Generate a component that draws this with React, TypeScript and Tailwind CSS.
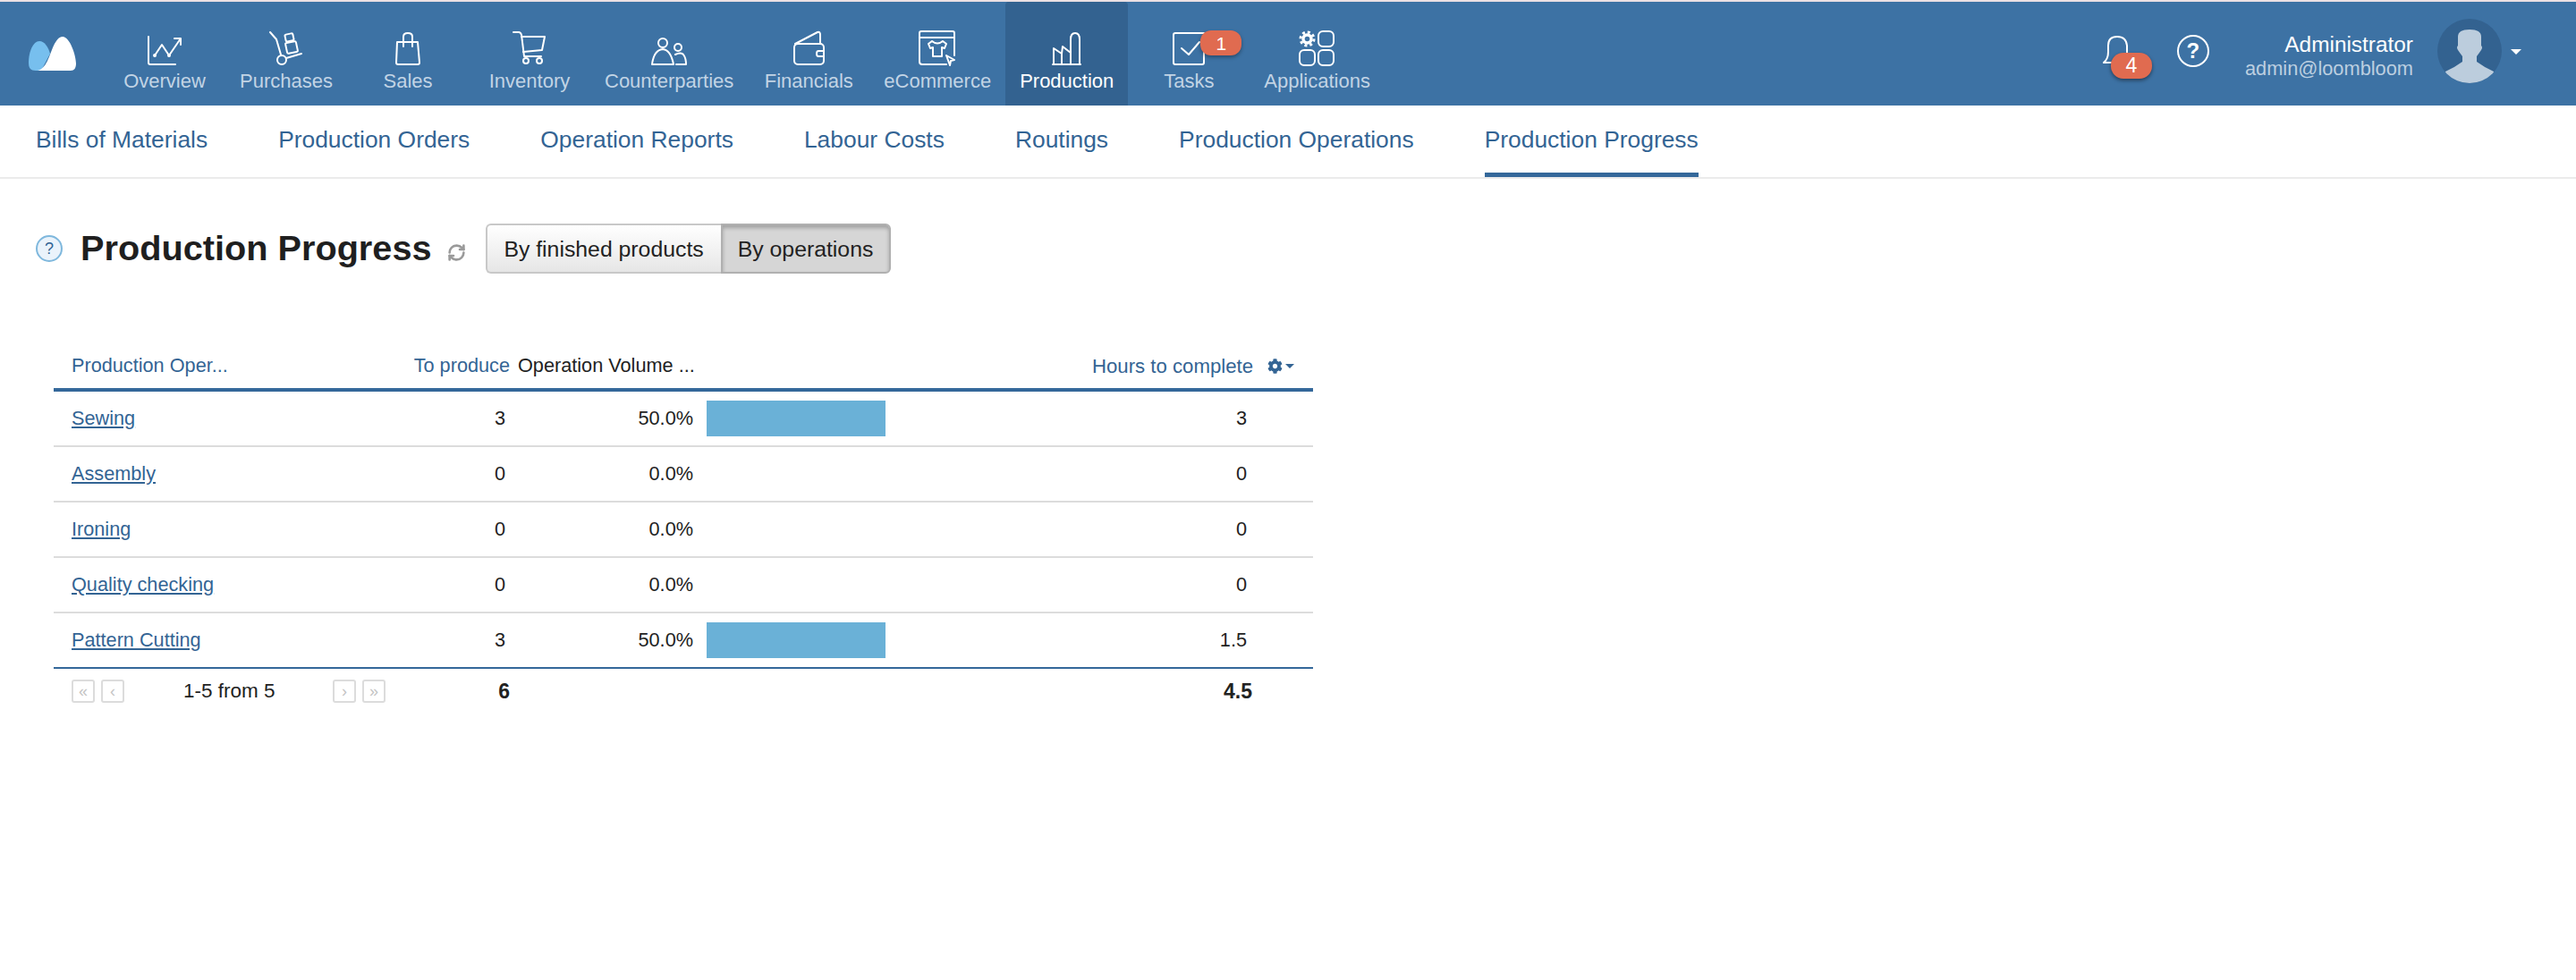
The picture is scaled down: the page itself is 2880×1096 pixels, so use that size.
import { RefreshCw } from 'lucide-react';
import { FaCog } from 'react-icons/fa';

const s = { fill: 'none', stroke: 'currentColor', strokeWidth: 2, strokeLinecap: 'round', strokeLinejoin: 'round' } as const;

function Logo() {
  return (
    <svg width="53" height="38" viewBox="0 0 53 38">
      <path fill="#77bfee" d="M8 38C2 38 0 35 0 29 0 17 5 5 12 5c6 0 10 7 12 14L14 38Z" />
      <path fill="#fff" d="M10 38c10-2 13-17 18-28 3-6 6-10 10-10 8 0 15 21 15 30 0 5-2 8-6 8Z" />
    </svg>
  );
}

const icons = {
  overview: (
    <svg width="40" height="40" viewBox="0 0 40 40" {...s}>
      <path d="M2 7V36q0 2 2 2H32" />
      <path d="M9 28 17 16 25 28 38 9M31 9h7v7" />
      <circle cx="9" cy="28" r="1" />
      <circle cx="25" cy="28" r="1" />
    </svg>
  ),
  purchases: (
    <svg width="38" height="40" viewBox="0 0 38 40" {...s}>
      <path d="M1 2 8 10 13 27" />
      <circle cx="14" cy="33" r="5" />
      <path d="M19 31 36 26" />
      <rect x="18" y="4" width="9" height="8" rx="1.5" transform="rotate(-12 22 8)" />
      <rect x="19" y="13" width="12" height="12" rx="1.5" transform="rotate(-12 25 19)" />
    </svg>
  ),
  sales: (
    <svg width="30" height="40" viewBox="0 0 30 40" {...s}>
      <path d="M3 13H26L28 36Q28 38 26 38H4Q2 38 2 36Z" />
      <path d="M10 18V7Q10 3 15 3 20 3 20 7V18" />
    </svg>
  ),
  inventory: (
    <svg width="38" height="40" viewBox="0 0 38 40" {...s}>
      <path d="M1 2H7Q9 2 10 5L13 29H32" />
      <path d="M10 7H36L33 22 12 24" />
      <circle cx="15" cy="34" r="3" />
      <circle cx="30" cy="34" r="3" />
    </svg>
  ),
  counterparties: (
    <svg width="40" height="40" viewBox="0 0 40 40" {...s}>
      <circle cx="13" cy="14" r="5" />
      <path d="M1 38Q3 22 13 21 22 22 25 38Z" />
      <circle cx="30" cy="19" r="4" />
      <path d="M27 27Q33 24 36 27 39 31 39 38H28" />
    </svg>
  ),
  financials: (
    <svg width="36" height="40" viewBox="0 0 36 40" {...s}>
      <path d="M3 15 28 2Q31 1 31 5V15" />
      <rect x="2" y="15" width="33" height="23" rx="4" />
      <path d="M35 23H29Q27 23 27 26 27 29 29 29H35" />
    </svg>
  ),
  ecommerce: (
    <svg width="42" height="40" viewBox="0 0 42 40" {...s}>
      <path d="M31 38H4Q1 38 1 35V3Q1 1 3 1H38Q40 1 40 3V28" />
      <path d="M1 8H40" />
      <path d="M15 12 11 15 13 20 16 19V29H26V19L29 20 31 15 27 12Q21 17 15 12Z" />
      <path d="M31 28 40 33 36 34 35 39Z" />
    </svg>
  ),
  production: (
    <svg width="33" height="40" viewBox="0 0 33 40" {...s}>
      <path d="M1 38H32M2 38V20L11 26V38M11 26 12 18 21 25V38" />
      <path d="M21 38V10Q21 3 26 3 31 3 31 10V38" />
    </svg>
  ),
  tasks: (
    <svg width="38" height="40" viewBox="0 0 38 40" {...s}>
      <path d="M36 3H4Q2 3 2 5V36Q2 38 4 38H34Q36 38 36 36V3" />
      <path d="M11 20 19 27 31 13" />
    </svg>
  ),
  apps: (
    <svg width="42" height="40" viewBox="0 0 42 40" {...s}>
      <rect x="22" y="1" width="17" height="17" rx="5" />
      <rect x="1" y="22" width="17" height="17" rx="5" />
      <rect x="22" y="22" width="17" height="17" rx="5" />
      <circle cx="9.5" cy="9.5" r="7.5" strokeWidth="3" strokeLinecap="butt" strokeDasharray="3 2.9" />
      <circle cx="9.5" cy="9.5" r="4.5" strokeWidth="3.4" />
    </svg>
  ),
};

const navItems = [
  { label: 'Overview', icon: icons.overview },
  { label: 'Purchases', icon: icons.purchases },
  { label: 'Sales', icon: icons.sales },
  { label: 'Inventory', icon: icons.inventory },
  { label: 'Counterparties', icon: icons.counterparties },
  { label: 'Financials', icon: icons.financials },
  { label: 'eCommerce', icon: icons.ecommerce },
  { label: 'Production', icon: icons.production, active: true },
  { label: 'Tasks', icon: icons.tasks, badge: '1' },
  { label: 'Applications', icon: icons.apps },
];

const subItems = [
  'Bills of Materials',
  'Production Orders',
  'Operation Reports',
  'Labour Costs',
  'Routings',
  'Production Operations',
  'Production Progress',
];

const rows = [
  { name: 'Sewing', qty: '3', pct: '50.0%', bar: true, hours: '3' },
  { name: 'Assembly', qty: '0', pct: '0.0%', bar: false, hours: '0' },
  { name: 'Ironing', qty: '0', pct: '0.0%', bar: false, hours: '0' },
  { name: 'Quality checking', qty: '0', pct: '0.0%', bar: false, hours: '0' },
  { name: 'Pattern Cutting', qty: '3', pct: '50.0%', bar: true, hours: '1.5' },
];

function PagerButton({ label }: { label: string }) {
  return (
    <span className="flex h-[26px] w-[26px] items-center justify-center rounded-[3px] border-2 border-[#dcdcdc] text-[18px] leading-none text-[#c4c4c4]">
      {label}
    </span>
  );
}

export default function App() {
  return (
    <div className="min-h-[1096px] bg-white [font-family:'Liberation_Sans',Arial,sans-serif]">
      {/* Top bar */}
      <div className="border-t-2 border-[#ebe0e4] bg-[#3d72a4]">
        <div className="flex h-[116px] items-stretch">
          <div className="flex w-[116px] shrink-0 items-start pl-[32px] pt-[39px]">
            <Logo />
          </div>
          {navItems.map((item) => (
            <div
              key={item.label}
              className={`flex min-w-[136px] flex-col items-center rounded-t-[4px] px-[16px] pt-[32px] text-white ${
                item.active ? 'bg-[#336290]' : ''
              }`}
            >
              <div className="relative flex h-[40px] items-end justify-center">
                {item.icon}
                {item.badge && (
                  <span className="absolute left-[32px] top-0 flex h-[28px] w-[46px] items-center justify-center rounded-[12px] bg-[#e06b50] text-[21px] leading-none text-white shadow-[0_2px_4px_rgba(0,0,0,0.35)]">
                    {item.badge}
                  </span>
                )}
              </div>
              <span className={`mt-[3px] whitespace-nowrap text-[22px] leading-[28px] ${item.active ? 'text-white' : 'text-[#c2d4e5]'}`}>
                {item.label}
              </span>
            </div>
          ))}

          <div className="ml-auto flex items-start pr-[61px]">
            <div className="relative mr-[51px] mt-[38px] h-[32px] w-[32px] text-white">
              <svg width="32" height="32" viewBox="0 0 32 32" {...s}>
                <path d="M1 30Q6 26 6 18V11Q6 1 16 1 26 1 27 11V22" />
                <path d="M1 30H12" />
              </svg>
              <span className="absolute left-[9px] top-[19px] flex h-[29px] w-[46px] items-center justify-center rounded-[14px] bg-[#e06b50] text-[23px] leading-none text-white shadow-[0_2px_4px_rgba(0,0,0,0.45)]">
                4
              </span>
            </div>
            <div className="mr-[40px] mt-[37px] flex h-[36px] w-[36px] items-center justify-center rounded-full border-2 border-white text-[24px] font-bold leading-none text-white">
              ?
            </div>
            <div className="mr-[27px] mt-[32px] flex flex-col items-end">
              <span className="text-[24.4px] leading-[32px] text-white">Administrator</span>
              <span className="mt-[-3px] text-[21.8px] leading-[28px] text-[#bccfe0]">admin@loombloom</span>
            </div>
            <div className="mt-[19px] h-[72px] w-[72px] overflow-hidden rounded-full bg-[#336290]">
              <svg width="72" height="72" viewBox="0 0 72 72">
                <path
                  fill="#bccddd"
                  d="M23 20Q23 12 36 12 49 12 49 20V30Q51 32 49 35 47 38 44 42V48Q52 54 63 59V72H9V59Q20 54 28 48V42Q25 38 23 35 21 32 23 30Z"
                />
              </svg>
            </div>
            <div className="ml-[10px] mt-[53px] h-0 w-0 border-x-[6px] border-t-[6px] border-x-transparent border-t-white" />
          </div>
        </div>
      </div>

      {/* Sub navigation */}
      <div className="flex h-[82px] gap-[79px] border-b-2 border-[#ebebeb] pl-[40px]">
        {subItems.map((item) => (
          <div
            key={item}
            className={`flex items-center whitespace-nowrap text-[26.4px] text-[#336494] ${
              item === 'Production Progress' ? 'border-b-[5px] border-[#34689a] pt-[2px]' : 'pb-[3px]'
            }`}
          >
            {item}
          </div>
        ))}
      </div>

      {/* Page title */}
      <div className="mt-[50px] flex h-[56px] items-center pl-[40px]">
        <div className="flex h-[30px] w-[30px] items-center justify-center rounded-full border-2 border-[#7fb8dd] bg-[#eaf3fb] text-[18px] leading-none text-[#336494]">
          ?
        </div>
        <h1 className="ml-[20px] text-[39.7px] font-bold leading-none text-[#1f1f1f]">Production Progress</h1>
        <RefreshCw className="ml-[17px] mt-[8px] text-[#9a9a9a]" size={21} strokeWidth={3} />
        <div className="ml-[22px] flex h-[56px] text-[24.8px] text-[#222]">
          <div className="flex w-[263px] items-center justify-center rounded-l-[6px] border-2 border-r-0 border-[#c8c8c8] bg-gradient-to-b from-white to-[#e6e6e6] pt-[2px]">
            By finished products
          </div>
          <div className="flex w-[190px] items-center justify-center rounded-r-[6px] border-2 border-[#b0b0b0] bg-[#d6d6d6] pt-[2px] shadow-[inset_0_3px_4px_rgba(0,0,0,0.25)]">
            By operations
          </div>
        </div>
      </div>

      {/* Table */}
      <div className="ml-[60px] mt-[79px] w-[1408px]">
        <table className="w-full table-fixed border-separate border-spacing-0 text-[21.7px] text-[#222]">
          <colgroup>
            <col className="w-[380px]" />
            <col className="w-[132px]" />
            <col className="w-[210px]" />
            <col className="w-[218px]" />
            <col />
          </colgroup>
          <thead>
            <tr>
              <th className="h-[53px] border-b-4 border-[#34689a] pl-[20px] text-left font-normal text-[#336494]">Production Oper...</th>
              <th className="border-b-4 border-[#34689a] pr-[2px] text-right font-normal text-[#336494]">To produce</th>
              <th className="whitespace-nowrap border-b-4 border-[#34689a] pl-[7px] text-left font-normal">Operation Volume ...</th>
              <th className="border-b-4 border-[#34689a]" />
              <th className="border-b-4 border-[#34689a] pr-[21px] font-normal text-[#336494]">
                <div className="flex items-center justify-end">
                  <span className="text-[22.2px]">Hours to complete</span>
                  <FaCog className="ml-[16px]" size={17} />
                  <span className="ml-[3px] h-0 w-0 border-x-[5px] border-t-[5px] border-x-transparent border-t-[#336494]" />
                </div>
              </th>
            </tr>
          </thead>
          <tbody>
            {rows.map((row, i) => {
              const line = i === rows.length - 1 ? 'border-[#34689a]' : 'border-[#dcdcdc]';
              return (
                <tr key={row.name}>
                  <td className={`h-[62px] border-b-2 pl-[20px] ${line}`}>
                    <span className="text-[#336494] underline">{row.name}</span>
                  </td>
                  <td className={`border-b-2 pr-[7px] text-right ${line}`}>{row.qty}</td>
                  <td className={`border-b-2 pr-[7px] text-right ${line}`}>{row.pct}</td>
                  <td className={`border-b-2 pl-[8px] ${line}`}>
                    {row.bar && <div className="h-[40px] w-[200px] bg-[#6ab1d7]" />}
                  </td>
                  <td className={`border-b-2 pr-[74px] text-right ${line}`}>{row.hours}</td>
                </tr>
              );
            })}
          </tbody>
          <tfoot>
            <tr>
              <td className="h-[50px] pl-[20px]">
                <div className="flex items-center">
                  <PagerButton label="«" />
                  <span className="w-[7px]" />
                  <PagerButton label="‹" />
                  <span className="w-[66px] shrink-0" />
                  <span className="w-[167px] shrink-0 whitespace-nowrap text-[22.5px]">1-5 from 5</span>
                  <PagerButton label="›" />
                  <span className="w-[7px]" />
                  <PagerButton label="»" />
                </div>
              </td>
              <td className="pr-[2px] text-right text-[23px] font-bold">6</td>
              <td />
              <td />
              <td className="pr-[68px] text-right text-[23px] font-bold">4.5</td>
            </tr>
          </tfoot>
        </table>
      </div>
    </div>
  );
}
